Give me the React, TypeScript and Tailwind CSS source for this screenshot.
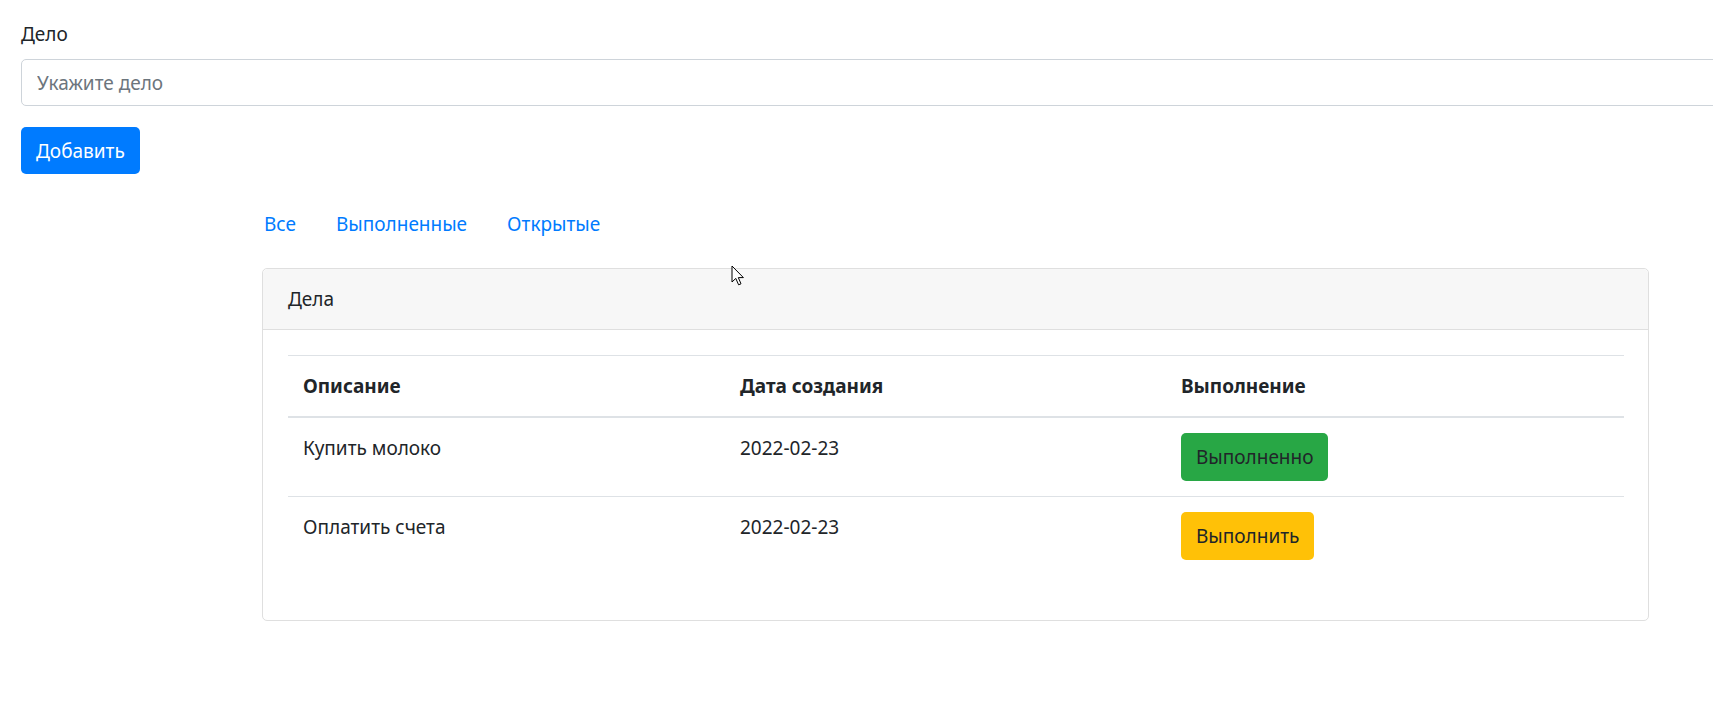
const tasks = [
  { id: 1, text: 'Купить молоко', date: '2022-02-23', done: true },
  { id: 2, text: 'Оплатить счета', date: '2022-02-23', done: false },
];

const Cursor = () => (
  <svg
    className="absolute left-[731px] top-[265px]"
    width="14"
    height="22"
    viewBox="0 0 14 22"
  >
    <path
      d="M1 1 L1 17 L4.8 13.4 L7.6 19.8 L10 18.8 L7.3 12.6 L12.4 12.6 Z"
      fill="#fff"
      stroke="#000"
      strokeWidth="1"
      strokeLinejoin="round"
    />
  </svg>
);

const App = () => {
  return (
    <div className="relative w-full h-[727px] overflow-hidden bg-white text-[#212529] font-['Noto_Sans','Open_Sans',sans-serif] text-[19px] leading-[30px]">
      <div className="pt-[19px] pl-[21px]">
        <label className="block mb-[10px]">Дело</label>
        <input
          className="block w-[1740px] h-[47px] px-[15px] border border-[#ced4da] rounded-[5px] text-[19px] outline-none placeholder:text-[#6c757d]"
          placeholder="Укажите дело"
        />
        <button className="mt-[21px] h-[47px] px-[15px] rounded-[5px] bg-[#007bff] text-white">
          Добавить
        </button>
      </div>

      <div className="ml-[262px] w-[1387px]">
        <ul className="flex mt-[25px] -ml-[18px]">
          <li>
            <a href="#" className="block px-[20px] py-[10px] text-[#007bff]">Все</a>
          </li>
          <li>
            <a href="#" className="block px-[20px] py-[10px] text-[#007bff]">Выполненные</a>
          </li>
          <li>
            <a href="#" className="block px-[20px] py-[10px] text-[#007bff]">Открытые</a>
          </li>
        </ul>

        <div className="mt-[19px] border border-[#dfdfdf] rounded-[5px]">
          <div className="px-[25px] py-[15px] bg-[#f7f7f7] border-b border-[#dfdfdf] rounded-t-[5px]">
            Дела
          </div>
          <div className="p-[25px]">
            <table className="w-full table-fixed border-collapse mb-[20px]">
              <colgroup>
                <col className="w-[437px]" />
                <col className="w-[441px]" />
                <col className="w-[458px]" />
              </colgroup>
              <thead>
                <tr>
                  <th className="p-[15px] text-left font-bold border-t border-b-2 border-[#dee2e6]">Описание</th>
                  <th className="p-[15px] text-left font-bold border-t border-b-2 border-[#dee2e6]">Дата создания</th>
                  <th className="p-[15px] text-left font-bold border-t border-b-2 border-[#dee2e6]">Выполнение</th>
                </tr>
              </thead>
              <tbody>
                {tasks.map((t) => (
                  <tr key={t.id}>
                    <td className="p-[15px] align-top border-t border-[#dee2e6]">{t.text}</td>
                    <td className="p-[15px] align-top border-t border-[#dee2e6]">{t.date}</td>
                    <td className="p-[15px] align-top border-t border-[#dee2e6]">
                      {t.done ? (
                        <button className="block h-[48px] px-[15px] rounded-[5px] bg-[#28a745] text-[#212529]">
                          Выполненно
                        </button>
                      ) : (
                        <button className="block h-[48px] px-[15px] rounded-[5px] bg-[#ffc107] text-[#212529]">
                          Выполнить
                        </button>
                      )}
                    </td>
                  </tr>
                ))}
              </tbody>
            </table>
          </div>
        </div>
      </div>

      <Cursor />
    </div>
  );
};

export default App;
